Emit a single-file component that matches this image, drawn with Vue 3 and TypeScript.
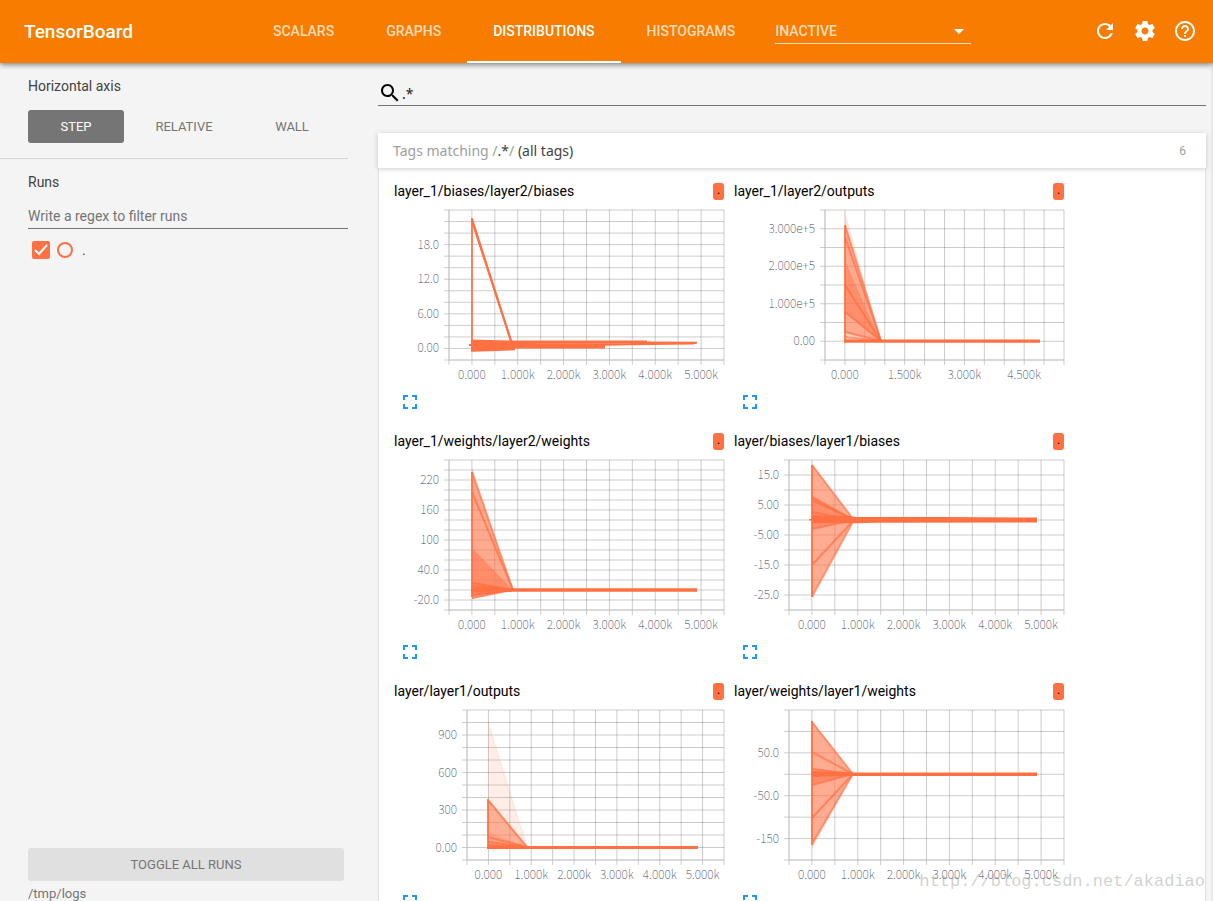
<script setup lang="ts">
import { ref } from 'vue'

interface Label { at: number; text: string }
interface Layer { top: number; bottom: number; alpha: number }
interface Ray { y: number; alpha: number }
interface Band { points: string; alpha: number }
interface Chart {
  tag: string
  left: number
  rows: number
  yLabels: Label[]
  xLabels: Label[]
  start: number
  meet: [number, number]
  stem: [number, number]
  layers: Layer[]
  rays: Ray[]
  bands: Band[]
}

const PLOT_TOP = 5
const PLOT_BOTTOM = 155
const PLOT_RIGHT = 330
const COLUMNS = 12

const tabs = ['SCALARS', 'GRAPHS', 'DISTRIBUTIONS', 'HISTOGRAMS']
const activeTab = ref('DISTRIBUTIONS')
const axes = ['STEP', 'RELATIVE', 'WALL']
const activeAxis = ref('STEP')
const tagFilter = ref('.*')
const runFilter = ref('')
const runChecked = ref(true)

const labels = (first: number, step: number, texts: string[]): Label[] =>
  texts.map((text, i) => ({ at: first + i * step, text }))

const thousands = labels(1, 2, ['0.000', '1.000k', '2.000k', '3.000k', '4.000k', '5.000k'])

const charts: Chart[] = [
  {
    tag: 'layer_1/biases/layer2/biases',
    left: 55,
    rows: 13,
    yLabels: labels(3, 3, ['18.0', '12.0', '6.00', '0.00']),
    xLabels: thousands,
    start: 78,
    meet: [118, 139],
    stem: [13, 146],
    layers: [],
    rays: [{ y: 14, alpha: 1 }, { y: 16, alpha: 1 }],
    bands: [
      { points: '75,139 78,139 78,141 75,141', alpha: 1 },
      { points: '77,134.5 95,135 120,135.6 253,135.6 253,136.6 303,136.8 303,138.6 299,139.6 236,140.2 211,140.8 211,143.6 150,143.4 121,143.6 121,145.2 88,146.4 77,146.8', alpha: 1 },
      { points: '142,138.4 236,138.6 236,139 142,139', alpha: 0.25 },
    ],
  },
  {
    tag: 'layer_1/layer2/outputs',
    left: 91,
    rows: 8,
    yLabels: labels(1, 2, ['3.000e+5', '2.000e+5', '1.000e+5', '0.00']),
    xLabels: labels(1, 3, ['0.000', '1.500k', '3.000k', '4.500k']),
    start: 111,
    meet: [147, 136],
    stem: [20, 138],
    layers: [
      { top: 7, bottom: 20, alpha: 0.18 },
      { top: 19, bottom: 55, alpha: 0.6 },
      { top: 55, bottom: 107, alpha: 0.78 },
      { top: 107, bottom: 127, alpha: 0.6 },
      { top: 127, bottom: 136, alpha: 0.35 },
    ],
    rays: [
      { y: 20, alpha: 0.6 }, { y: 32, alpha: 0.7 }, { y: 80, alpha: 0.8 },
      { y: 107, alpha: 0.8 }, { y: 127, alpha: 0.7 }, { y: 132, alpha: 0.6 },
    ],
    bands: [{ points: '110,134.5 306,134.5 306,137.8 110,137.8', alpha: 1 }],
  },
  {
    tag: 'layer_1/weights/layer2/weights',
    left: 55,
    rows: 15,
    yLabels: labels(2, 3, ['220', '160', '100', '40.0', '-20.0']),
    xLabels: thousands,
    start: 78,
    meet: [119, 135],
    stem: [17, 142],
    layers: [
      { top: 12, bottom: 17, alpha: 0.2 },
      { top: 16, bottom: 92, alpha: 0.6 },
      { top: 92, bottom: 140, alpha: 0.8 },
      { top: 140, bottom: 144, alpha: 0.6 },
    ],
    rays: [
      { y: 17, alpha: 0.6 }, { y: 37, alpha: 0.7 }, { y: 128, alpha: 0.9 },
      { y: 131, alpha: 0.9 }, { y: 140, alpha: 1 }, { y: 143, alpha: 0.6 },
    ],
    bands: [{ points: '77,132.5 119,133.2 303,133.2 303,136.8 119,136.8 77,137.5', alpha: 1 }],
  },
  {
    tag: 'layer/biases/layer1/biases',
    left: 55,
    rows: 10,
    yLabels: labels(1, 2, ['15.0', '5.00', '-5.00', '-15.0', '-25.0']),
    xLabels: thousands,
    start: 78,
    meet: [120, 65],
    stem: [10, 142],
    layers: [
      { top: 9, bottom: 41, alpha: 0.58 },
      { top: 41, bottom: 74, alpha: 0.78 },
      { top: 74, bottom: 142, alpha: 0.58 },
    ],
    rays: [
      { y: 10, alpha: 0.6 }, { y: 42, alpha: 0.7 }, { y: 45, alpha: 0.8 }, { y: 57, alpha: 0.8 },
      { y: 61, alpha: 1 }, { y: 67, alpha: 1 }, { y: 74, alpha: 0.7 }, { y: 110, alpha: 0.7 }, { y: 142, alpha: 0.6 },
    ],
    bands: [
      { points: '75,64 78,64 78,65.5 75,65.5', alpha: 1 },
      { points: '78,60.5 115,61 122,62 210,62 303,62.6 303,67.4 142,67.8 122,68.2 78,68', alpha: 1 },
    ],
  },
  {
    tag: 'layer/layer1/outputs',
    left: 73,
    rows: 12,
    yLabels: labels(2, 3, ['900', '600', '300', '0.00']),
    xLabels: thousands,
    start: 94,
    meet: [133, 142],
    stem: [94, 144],
    layers: [
      { top: 17, bottom: 94, alpha: 0.12 },
      { top: 94, bottom: 126, alpha: 0.56 },
      { top: 126, bottom: 142, alpha: 0.65 },
    ],
    rays: [
      { y: 17, alpha: 0.08 }, { y: 95, alpha: 0.7 }, { y: 132, alpha: 0.7 }, { y: 137, alpha: 0.8 }, { y: 140, alpha: 0.9 },
    ],
    bands: [{ points: '93,141 304,141 304,144 93,144', alpha: 1 }],
  },
  {
    tag: 'layer/weights/layer1/weights',
    left: 55,
    rows: 7,
    yLabels: labels(2, 2, ['50.0', '-50.0', '-150']),
    xLabels: thousands,
    start: 78,
    meet: [119, 69],
    stem: [16, 140],
    layers: [
      { top: 16, bottom: 69, alpha: 0.58 },
      { top: 69, bottom: 80, alpha: 0.8 },
      { top: 80, bottom: 140, alpha: 0.58 },
      { top: 140, bottom: 144, alpha: 0.2 },
    ],
    rays: [
      { y: 17, alpha: 0.6 }, { y: 47, alpha: 0.6 }, { y: 64, alpha: 0.8 }, { y: 67, alpha: 1 },
      { y: 71, alpha: 0.9 }, { y: 80, alpha: 0.7 }, { y: 113, alpha: 0.7 }, { y: 139, alpha: 0.6 },
    ],
    bands: [{ points: '77,66.5 119,67.5 303,67.5 303,71 119,71 77,71.5', alpha: 1 }],
  },
]

const gridX = (c: Chart, i: number) => c.left + ((PLOT_RIGHT - c.left) * i) / COLUMNS
const gridY = (c: Chart, i: number) => PLOT_TOP + ((PLOT_BOTTOM - PLOT_TOP) * i) / c.rows
const wedge = (c: Chart, l: Layer) => `${c.start},${l.top} ${c.meet[0]},${c.meet[1]} ${c.start},${l.bottom}`
</script>

<template>
  <div class="page">
    <header class="toolbar">
      <h1 class="brand">TensorBoard</h1>
      <nav class="tabs">
        <button
          v-for="tab in tabs"
          :key="tab"
          type="button"
          class="tab"
          :class="{ active: tab === activeTab }"
          @click="activeTab = tab"
        >{{ tab }}</button>
      </nav>
      <div class="inactive">
        <select aria-label="Inactive dashboards"><option>INACTIVE</option></select>
        <svg class="caret" width="24" height="24" viewBox="0 0 24 24"><path d="M7 10l5 5 5-5z" /></svg>
      </div>
      <div class="actions">
        <button type="button" aria-label="Reload">
          <svg width="24" height="24" viewBox="0 0 24 24"><path d="M17.65 6.35C16.2 4.9 14.21 4 12 4c-4.42 0-7.99 3.58-7.99 8s3.57 8 7.99 8c3.73 0 6.84-2.55 7.73-6h-2.08c-.82 2.33-3.04 4-5.65 4-3.31 0-6-2.69-6-6s2.69-6 6-6c1.66 0 3.14.69 4.22 1.78L13 11h7V4l-2.35 2.35z" /></svg>
        </button>
        <button type="button" aria-label="Settings">
          <svg width="24" height="24" viewBox="0 0 24 24"><path d="M19.43 12.98c.04-.32.07-.64.07-.98s-.03-.66-.07-.98l2.11-1.65c.19-.15.24-.42.12-.64l-2-3.46c-.12-.22-.39-.3-.61-.22l-2.49 1c-.52-.4-1.08-.73-1.69-.98l-.38-2.65C14.46 2.18 14.25 2 14 2h-4c-.25 0-.46.18-.49.42l-.38 2.65c-.61.25-1.17.59-1.69.98l-2.49-1c-.23-.09-.49 0-.61.22l-2 3.46c-.13.22-.07.49.12.64l2.11 1.65c-.04.32-.07.65-.07.98s.03.66.07.98l-2.11 1.65c-.19.15-.24.42-.12.64l2 3.46c.12.22.39.3.61.22l2.49-1c.52.4 1.08.73 1.69.98l.38 2.65c.03.24.24.42.49.42h4c.25 0 .46-.18.49-.42l.38-2.65c.61-.25 1.17-.59 1.69-.98l2.49 1c.23.09.49 0 .61-.22l2-3.46c.12-.22.07-.49-.12-.64l-2.11-1.65zM12 15.5c-1.93 0-3.5-1.57-3.5-3.5s1.57-3.5 3.5-3.5 3.5 1.57 3.5 3.5-1.57 3.5-3.5 3.5z" /></svg>
        </button>
        <button type="button" aria-label="Help">
          <svg width="24" height="24" viewBox="0 0 24 24"><path d="M11 18h2v-2h-2v2zm1-16C6.48 2 2 6.48 2 12s4.48 10 10 10 10-4.48 10-10S17.52 2 12 2zm0 18c-4.41 0-8-3.59-8-8s3.59-8 8-8 8 3.59 8 8-3.59 8-8 8zm0-14c-2.21 0-4 1.79-4 4h2c0-1.1.9-2 2-2s2 .9 2 2c0 2-3 1.75-3 5h2c0-2.25 3-2.5 3-5 0-2.21-1.79-4-4-4z" /></svg>
        </button>
      </div>
    </header>

    <div class="body">
      <aside class="sidebar">
        <section class="axis-section">
          <h2>Horizontal axis</h2>
          <div class="axis-buttons">
            <button
              v-for="axis in axes"
              :key="axis"
              type="button"
              :class="{ chosen: axis === activeAxis }"
              @click="activeAxis = axis"
            >{{ axis }}</button>
          </div>
        </section>
        <section class="runs-section">
          <h2>Runs</h2>
          <input v-model="runFilter" class="run-filter" type="text" aria-label="Filter runs" placeholder="Write a regex to filter runs" />
          <div class="run">
            <span class="check">
              <input id="run-root" v-model="runChecked" type="checkbox" />
              <svg v-if="runChecked" width="18" height="18" viewBox="0 0 18 18"><path d="M3 9l4 4 8-9" /></svg>
            </span>
            <input class="isolate" type="radio" name="isolate" aria-label="Show only this run" />
            <label for="run-root">.</label>
          </div>
        </section>
        <footer class="sidebar-foot">
          <button type="button" class="toggle-all">TOGGLE ALL RUNS</button>
          <div class="logdir">/tmp/logs</div>
        </footer>
      </aside>

      <main class="content">
        <label class="search">
          <svg width="24" height="24" viewBox="0 0 24 24"><path d="M15.5 14h-.79l-.28-.27C15.41 12.59 16 11.11 16 9.5 16 5.91 13.09 3 9.5 3S3 5.91 3 9.5 5.91 16 9.5 16c1.61 0 3.09-.59 4.23-1.57l.27.28v.79l5 4.99L20.49 19l-4.99-5zm-6 0C7.01 14 5 11.99 5 9.5S7.01 5 9.5 5 14 7.01 14 9.5 11.99 14 9.5 14z" /></svg>
          <input v-model="tagFilter" type="text" aria-label="Filter tags" />
        </label>

        <button type="button" class="category">
          <span class="category-name">Tags matching /<b>.*</b>/ <b>(all tags)</b></span>
          <span class="count">6</span>
        </button>

        <div class="cards">
          <article v-for="chart in charts" :key="chart.tag" class="card">
            <div class="card-head">
              <h3>{{ chart.tag }}</h3>
              <span class="run-chip">.</span>
            </div>
            <svg class="plot" width="330" height="180" viewBox="0 0 330 180">
              <g class="grid">
                <line v-for="i in COLUMNS + 1" :key="'x' + i" :x1="gridX(chart, i - 1)" :x2="gridX(chart, i - 1)" :y1="PLOT_TOP" y2="160" />
                <line v-for="i in chart.rows + 1" :key="'y' + i" :x1="chart.left - 5" :x2="PLOT_RIGHT" :y1="gridY(chart, i - 1)" :y2="gridY(chart, i - 1)" />
                <line class="axis" :x1="chart.left" :x2="chart.left" :y1="PLOT_TOP" :y2="PLOT_BOTTOM" />
                <line class="axis" :x1="chart.left" :x2="PLOT_RIGHT" :y1="PLOT_BOTTOM" :y2="PLOT_BOTTOM" />
              </g>
              <g class="series">
                <polygon v-for="(l, i) in chart.layers" :key="'l' + i" :points="wedge(chart, l)" :fill-opacity="l.alpha" />
                <line
                  v-for="(r, i) in chart.rays"
                  :key="'r' + i"
                  :x1="chart.start"
                  :y1="r.y"
                  :x2="chart.meet[0]"
                  :y2="chart.meet[1]"
                  :stroke-opacity="r.alpha"
                />
                <line :x1="chart.start" :x2="chart.start" :y1="chart.stem[0]" :y2="chart.stem[1]" stroke-opacity="0.85" />
                <polygon v-for="(b, i) in chart.bands" :key="'b' + i" :points="b.points" :fill-opacity="b.alpha" :class="{ pale: b.alpha < 1 }" />
              </g>
              <g class="ticks">
                <text v-for="t in chart.yLabels" :key="t.text" :x="chart.left - 10" :y="gridY(chart, t.at) + 4" text-anchor="end">{{ t.text }}</text>
                <text v-for="t in chart.xLabels" :key="t.text" :x="gridX(chart, t.at)" y="174" text-anchor="middle">{{ t.text }}</text>
              </g>
            </svg>
            <button type="button" class="expand" aria-label="Expand chart">
              <svg width="24" height="24" viewBox="0 0 24 24"><path d="M7 14H5v5h5v-2H7v-3zm-2-4h2V7h3V5H5v5zm12 7h-3v2h5v-5h-2v3zM14 5v2h3v3h2V5h-5z" /></svg>
            </button>
          </article>
        </div>
      </main>
    </div>
    <div class="watermark">http://blog.csdn.net/akadiao</div>
  </div>
</template>

<style>
body {
  margin: 0;
  overflow: hidden;
}
</style>

<style scoped>
.page {
  position: relative;
  display: flex;
  flex-direction: column;
  height: 100vh;
  overflow: hidden;
  background: #f4f4f4;
  font-family: Roboto, "Liberation Sans", sans-serif;
  font-size: 14px;
  color: #424242;
}
button,
input,
select {
  font: inherit;
  color: inherit;
  border: 0;
  padding: 0;
  margin: 0;
  background: none;
  border-radius: 0;
  outline: none;
}
button {
  cursor: pointer;
}
h1,
h2,
h3 {
  margin: 0;
  font-weight: 400;
}
svg {
  display: block;
}

.toolbar {
  position: relative;
  z-index: 1;
  display: flex;
  flex: none;
  align-items: center;
  height: 63px;
  padding: 0 16px 0 24px;
  background: #f77c00;
  color: #fff;
  box-shadow: 0 2px 5px rgba(0, 0, 0, 0.45);
}
.brand {
  width: 223px;
  font-size: 19px;
  font-weight: 500;
  line-height: 24px;
}
.tabs {
  display: flex;
  height: 100%;
}
.tab {
  height: 100%;
  padding: 0 26px;
  border-bottom: 2px solid transparent;
  font-weight: 500;
  color: #fddcb9;
}
.tab.active {
  color: #fff;
  border-color: #fff;
}
.inactive {
  position: relative;
  width: 196px;
  margin-left: 14px;
  border-bottom: 1px solid #fddcb9;
}
.inactive select {
  display: block;
  width: 100%;
  height: 24px;
  appearance: none;
  font-weight: 500;
  color: #fddcb9;
}
.caret {
  position: absolute;
  right: 0;
  top: 0;
  pointer-events: none;
}
.toolbar svg {
  fill: #fff;
}
.actions {
  display: flex;
  gap: 16px;
  margin-left: auto;
  padding-bottom: 1px;
}

.body {
  display: flex;
  flex: 1;
  min-height: 0;
  border-right: 2px solid #e8e8e8;
}
.sidebar {
  display: flex;
  flex: none;
  flex-direction: column;
  width: 348px;
}
h2 {
  font-size: 14px;
  line-height: 20px;
}
.axis-section {
  padding: 13px 0 15px 28px;
  border-bottom: 1px solid #d5d5d5;
}
.axis-buttons {
  display: flex;
  gap: 12px;
  margin-top: 14px;
}
.axis-buttons button {
  min-width: 96px;
  height: 33px;
  border-radius: 3px;
  font-size: 13px;
  color: #757575;
}
.axis-buttons .chosen {
  background: #757575;
  color: #fff;
}
.runs-section {
  padding: 13px 0 0 28px;
}
.run-filter {
  display: block;
  width: 100%;
  height: 24px;
  margin-top: 12px;
  border-bottom: 1px solid #757575;
}
.run-filter::placeholder {
  color: #757575;
  opacity: 1;
}
.run {
  display: flex;
  align-items: center;
  height: 18px;
  margin: 12px 0 0 4px;
}
.check {
  position: relative;
  width: 18px;
  height: 18px;
}
.check input {
  display: block;
  width: 18px;
  height: 18px;
  appearance: none;
  border: 2px solid #ff7043;
  border-radius: 2px;
}
.check input:checked {
  background: #ff7043;
}
.check svg {
  position: absolute;
  inset: 0;
  pointer-events: none;
}
.check path {
  fill: none;
  stroke: #fff;
  stroke-width: 2;
}
.isolate {
  width: 16px;
  height: 16px;
  margin: 0 9px 0 7px;
  appearance: none;
  border: 2px solid #ff7043;
  border-radius: 50%;
}
.sidebar-foot {
  margin-top: auto;
  padding: 0 4px 0 28px;
  font-size: 13px;
  color: #757575;
}
.toggle-all {
  width: 100%;
  height: 33px;
  border-radius: 3px;
  background: #e0e0e0;
}
.logdir {
  line-height: 20px;
  margin: 3px 0 -3px;
}

.content {
  display: flex;
  flex: 1;
  flex-direction: column;
  min-width: 0;
  margin: 18px 5px 0 30px;
}
.search {
  display: flex;
  flex: none;
  align-items: center;
  height: 24px;
  border-bottom: 1px solid #757575;
  color: #212121;
}
.search svg {
  fill: #000;
}
.search input {
  flex: 1;
  min-width: 0;
  font-family: "Noto Sans", sans-serif;
  font-size: 14px;
}
.category {
  position: relative;
  z-index: 1;
  display: flex;
  flex: none;
  align-items: center;
  justify-content: space-between;
  height: 35px;
  margin-top: 27px;
  padding: 0 20px 0 15px;
  background: #fff;
  box-shadow: 0 1px 5px rgba(0, 0, 0, 0.2);
  color: #9e9e9e;
}
.category-name {
  font-family: "Noto Sans", sans-serif;
  font-size: 14px;
}
.category b {
  font-weight: 400;
  color: #424242;
}
.count {
  font-size: 12px;
}
.cards {
  display: flex;
  flex: 1;
  flex-wrap: wrap;
  align-content: flex-start;
  gap: 0 10px;
  min-height: 0;
  padding: 10px 140px 0 15px;
  overflow: hidden;
  background: #fff;
  border: solid #e0e0e0;
  border-width: 0 1px;
}
.card {
  width: 330px;
  height: 250px;
}
.card-head {
  display: flex;
  align-items: center;
  justify-content: space-between;
  height: 26px;
  color: #000;
}
h3 {
  font-size: 14px;
  line-height: 20px;
}
.run-chip {
  width: 11px;
  height: 17px;
  border-radius: 3px;
  background: #ff7043;
  font-size: 12px;
  line-height: 14px;
  text-align: center;
}
.plot {
  margin-top: 1px;
  overflow: visible;
}
.series {
  fill: #ff7043;
  stroke: none;
}
.series line {
  stroke: #ff7043;
  stroke-width: 2;
}
.series .pale {
  fill: #fff;
}
.grid line {
  stroke: #000;
  stroke-opacity: 0.2;
}
.grid .axis {
  stroke: #ccc;
  stroke-opacity: 1;
}
.ticks {
  fill: #3a4058;
  font-family: "Noto Sans CJK SC", sans-serif;
  font-size: 12px;
  font-weight: 100;
}
.expand {
  margin: 5px 0 0 4px;
}
.expand svg {
  fill: #2196f3;
}
.watermark {
  position: absolute;
  right: 8px;
  bottom: 7px;
  font-family: "Liberation Mono", monospace;
  font-size: 17px;
  line-height: 24px;
  color: rgba(120, 120, 110, 0.35);
  pointer-events: none;
}
</style>
